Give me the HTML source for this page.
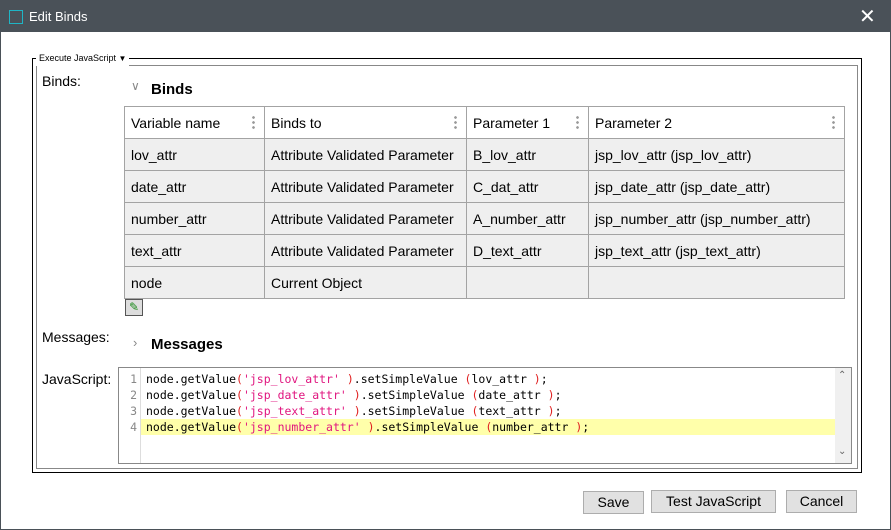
<!DOCTYPE html>
<html><head><style>
*{box-sizing:border-box;margin:0;padding:0}
body{width:891px;height:530px;background:#fff;font-family:"Liberation Sans",Tahoma,sans-serif;font-size:14px;color:#000;position:relative;overflow:hidden;border:1px solid #4a5158}
.a{position:absolute}
.title{left:0;top:0;width:891px;height:31px;background:#4a5158;color:#fff;font-size:13px}
table{border-collapse:collapse;position:absolute;left:123px;top:105px}
td{border:1px solid #a3a3a3;height:32px;padding:0 6px;background:#efefef;white-space:nowrap;position:relative}
tr.h td{background:#fff}
.dots{position:absolute;right:9px;top:8px;width:3px;height:14px;background:radial-gradient(circle,#999 1.2px,transparent 1.5px) 0 0/3px 5px repeat-y}
.code{font-family:"DejaVu Sans Mono","Liberation Mono",monospace;font-size:11.5px;line-height:16px;white-space:pre}
.s{color:#e0157f}.p{color:#e02020}
.btn{position:absolute;top:490px;height:23px;background:#e1e1e1;border:1px solid #adadad;text-align:center;line-height:21px;font-size:14px}
</style></head><body>
<div class="a title">
 <div class="a" style="left:8px;top:9px;width:14px;height:14px;border:1px solid #1fb5c5"></div>
 <div class="a" style="left:28px;top:8px">Edit Binds</div>
 <div class="a" style="left:858px;top:3px;font-size:20px">✕</div>
</div>
<div class="a" style="left:31px;top:57px;width:830px;height:415px;border:1px solid #000"></div>
<div class="a" style="left:35px;top:64px;width:822px;height:404px;border:1px solid #888"></div>
<div class="a" style="left:35px;top:50px;background:#fff;padding:0 3px;font-size:9px;line-height:14px">Execute JavaScript <span style="font-size:8px">▼</span></div>
<div class="a" style="left:41px;top:72px">Binds:</div>
<div class="a" style="left:130px;top:78px;color:#888;font-size:12px">∨</div>
<div class="a" style="left:150px;top:80px;font-weight:bold;font-size:15px">Binds</div>
<table>
<tr class="h"><td style="width:140px">Variable name<span class="dots"></span></td><td style="width:202px">Binds to<span class="dots"></span></td><td style="width:122px">Parameter 1<span class="dots"></span></td><td style="width:256px">Parameter 2<span class="dots"></span></td></tr>
<tr><td>lov_attr</td><td>Attribute Validated Parameter</td><td>B_lov_attr</td><td>jsp_lov_attr (jsp_lov_attr)</td></tr>
<tr><td>date_attr</td><td>Attribute Validated Parameter</td><td>C_dat_attr</td><td>jsp_date_attr (jsp_date_attr)</td></tr>
<tr><td>number_attr</td><td>Attribute Validated Parameter</td><td>A_number_attr</td><td>jsp_number_attr (jsp_number_attr)</td></tr>
<tr><td>text_attr</td><td>Attribute Validated Parameter</td><td>D_text_attr</td><td>jsp_text_attr (jsp_text_attr)</td></tr>
<tr><td>node</td><td>Current Object</td><td></td><td></td></tr>
</table>
<div class="a" style="left:124px;top:298px;width:18px;height:17px;border:1px solid #555;background:#ddd;color:#1a8a1a;font-size:12px;line-height:14px;text-align:center">✎</div>
<div class="a" style="left:41px;top:328px">Messages:</div>
<div class="a" style="left:132px;top:334px;color:#888;font-size:13px">›</div>
<div class="a" style="left:150px;top:335px;font-weight:bold;font-size:15px">Messages</div>
<div class="a" style="left:41px;top:370px">JavaScript:</div>
<div class="a" style="left:117px;top:366px;width:734px;height:97px;border:1px solid #888;background:#fff">
 <div class="a" style="left:0;top:0;width:22px;height:95px;border-right:1px solid #ddd"></div>
 <div class="a" style="left:22px;top:51px;width:694px;height:16px;background:#ffffaa"></div>
 <div class="a" style="left:716px;top:0;width:16px;height:95px;background:#f0f0f0;color:#666;font-size:10px;text-align:center">
  <div class="a" style="left:3px;top:2px">⌃</div><div class="a" style="left:3px;top:78px">⌄</div></div>
 <div class="a code" style="left:4px;top:3px;color:#888;text-align:right;width:14px">1
2
3
4</div>
 <div class="a code" style="left:27px;top:3px">node.getValue<span class="p">(</span><span class="s">'jsp_lov_attr'</span> <span class="p">)</span>.setSimpleValue <span class="p">(</span>lov_attr <span class="p">)</span>;
node.getValue<span class="p">(</span><span class="s">'jsp_date_attr'</span> <span class="p">)</span>.setSimpleValue <span class="p">(</span>date_attr <span class="p">)</span>;
node.getValue<span class="p">(</span><span class="s">'jsp_text_attr'</span> <span class="p">)</span>.setSimpleValue <span class="p">(</span>text_attr <span class="p">)</span>;
node.getValue<span class="p">(</span><span class="s">'jsp_number_attr'</span> <span class="p">)</span>.setSimpleValue <span class="p">(</span>number_attr <span class="p">)</span>;</div>
</div>
<div class="btn" style="left:582px;width:61px">Save</div>
<div class="btn" style="left:650px;width:125px;top:489px">Test JavaScript</div>
<div class="btn" style="left:785px;width:71px;top:489px">Cancel</div>
</body></html>
